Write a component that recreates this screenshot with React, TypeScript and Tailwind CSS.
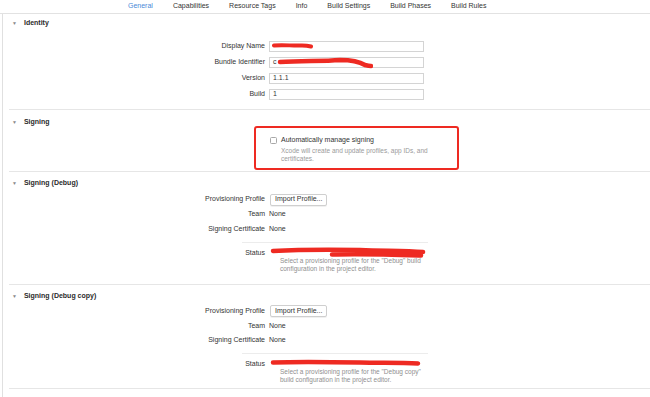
import React from "react";

const font = { fontFamily: "'Liberation Sans', Arial, sans-serif" };

const tabs = [
  "General",
  "Capabilities",
  "Resource Tags",
  "Info",
  "Build Settings",
  "Build Phases",
  "Build Rules",
];

const SectionHeader = ({ title }: { title: string }) => (
  <div className="flex h-[8px] items-center pl-[3px] text-[7px] leading-[8px] font-bold text-[#2b2b2b]">
    <span className="mr-[7px] text-[5px] text-[#8a8a8a]">▼</span>
    {title}
  </div>
);

const Row = ({ label, children, h = "h-[16px]" }: { label: string; children: React.ReactNode; h?: string }) => (
  <div className={`flex ${h} items-center`}>
    <div className="w-[256px] text-right text-[7px] text-[#333]">{label}</div>
    <div className="ml-[4px] flex flex-1 items-center">{children}</div>
  </div>
);

const Field = ({ value, children }: { value?: string; children?: React.ReactNode }) => (
  <div className="relative flex h-[11px] w-[155px] items-center border border-[#d4d4d4] bg-white pl-[3px] text-[7px] text-[#333]">
    {value}
    {children}
  </div>
);

const Scribble = ({ d, w, h, className, sw = 4 }: { d: string; w: number; h: number; className: string; sw?: number }) => (
  <svg width={w} height={h} viewBox={`0 0 ${w} ${h}`} className={`pointer-events-none absolute ${className}`}>
    <path d={d} stroke="#ee2a22" strokeWidth={sw} fill="none" strokeLinecap="round" strokeLinejoin="round" />
  </svg>
);

const SigningBlock = ({ copy }: { copy?: boolean }) => (
  <>
    <Row label="Provisioning Profile" h={copy ? "h-[14.5px]" : "h-[15px]"}>
      <div className="ml-[1px] flex h-[12px] items-center rounded-[2px] border border-[#cfcfcf] bg-white px-[4px] text-[7px] text-[#333] shadow-[0_1px_0_rgba(0,0,0,0.06)]">
        Import Profile...
      </div>
    </Row>
    <Row label="Team" h={copy ? "h-[14.5px]" : "h-[15px]"}>
      <span className="text-[7px] text-[#333]">None</span>
    </Row>
    <Row label="Signing Certificate" h={copy ? "h-[14.5px]" : "h-[15px]"}>
      <span className="text-[7px] text-[#333]">None</span>
    </Row>
    <div className="mt-[5px] ml-[233px] w-[186px] border-t border-[#ececec]" />
    <div className="relative mt-[5px] flex">
      <div className="w-[256px] pt-[1px] text-right text-[7px] leading-[8px] text-[#333]">Status</div>
      <div className="ml-[5px] flex flex-col">
        <div className="relative h-[9px] w-[155px]">
          {copy ? (
            <Scribble w={152} h={10} className="top-[-1px] left-[0px]" sw={4.5} d="M3 4.5 C30 3.5 60 4 90 4.5 C110 5 130 4.5 148 5.5" />
          ) : (
            <Scribble w={158} h={14} className="top-[-2px] left-[0px]" sw={4.5} d="M3 5 C30 3.5 60 3.5 90 4 C115 5 135 4.5 153 6 M62 8.5 C90 7.5 120 8.5 151 9.5" />
          )}
        </div>
        <div className="pl-[10px] text-[6.5px] leading-[8px] text-[#8f8f8f]">
          {copy ? (
            <>
              Select a provisioning profile for the "Debug copy"
              <br />
              build configuration in the project editor.
            </>
          ) : (
            <>
              Select a provisioning profile for the "Debug" build
              <br />
              configuration in the project editor.
            </>
          )}
        </div>
      </div>
    </div>
  </>
);

export default function App() {
  return (
    <div className="relative h-[397px] w-[650px] overflow-hidden bg-white" style={font}>
      <div className="flex h-[14px] items-center gap-[20px] border-b border-[#e2e2e2] pl-[128px] text-[7px] text-[#333]">
        {tabs.map((t, i) => (
          <span key={t} className={i === 0 ? "text-[#4a8ad8]" : ""}>
            {t}
          </span>
        ))}
      </div>
      <div className="ml-[2px] h-[383px] border-l border-[#e0e0e0]">
        {/* Identity */}
        <div className="ml-[6px] h-[96px] border-b border-[#e6e6e6] pt-[5px]">
          <SectionHeader title="Identity" />
          <div className="mt-[11px]">
            <Row label="Display Name">
              <Field>
                <Scribble w={42} h={8} className="top-[0px] left-[2px]" d="M2 3.5 C12 2.5 20 4 30 3.5 C34 3.5 37 4 39 4.5" />
              </Field>
            </Row>
            <Row label="Bundle Identifier">
              <Field value="c">
                <Scribble w={96} h={12} className="top-[-1px] left-[7px]" sw={4.5} d="M3 5 C25 3.5 45 4.5 63 3 C76 3 83 5 88 8 C92 9 93 9 94 9" />
              </Field>
            </Row>
            <Row label="Version">
              <Field value="1.1.1" />
            </Row>
            <Row label="Build">
              <Field value="1" />
            </Row>
          </div>
        </div>

        {/* Signing */}
        <div className="ml-[6px] h-[62px] border-b border-[#e6e6e6] pt-[8px]">
          <SectionHeader title="Signing" />
          <div className="ml-[245px] h-[44px] w-[205px] rounded-[3px] border-2 border-[#ee2a22] pt-[7px] pl-[14px]">
            <div className="flex items-center">
              <div className="h-[7px] w-[7px] rounded-[1.5px] border border-[#a8a8a8] bg-white" />
              <span className="ml-[4px] text-[7px] text-[#333]">Automatically manage signing</span>
            </div>
            <div className="mt-[1px] pl-[11px] text-[6.5px] leading-[8px] text-[#9a9a9a]">
              Xcode will create and update profiles, app IDs, and
              <br />
              certificates.
            </div>
          </div>
        </div>

        {/* Signing (Debug) */}
        <div className="ml-[6px] h-[113px] border-b border-[#e6e6e6] pt-[7px]">
          <SectionHeader title="Signing (Debug)" />
          <div className="mt-[5px]">
            <SigningBlock />
          </div>
        </div>

        {/* Signing (Debug copy) */}
        <div className="ml-[6px] h-[104px] border-b border-[#e6e6e6] pt-[7px]">
          <SectionHeader title="Signing (Debug copy)" />
          <div className="mt-[4px]">
            <SigningBlock copy />
          </div>
        </div>
      </div>
    </div>
  );
}
